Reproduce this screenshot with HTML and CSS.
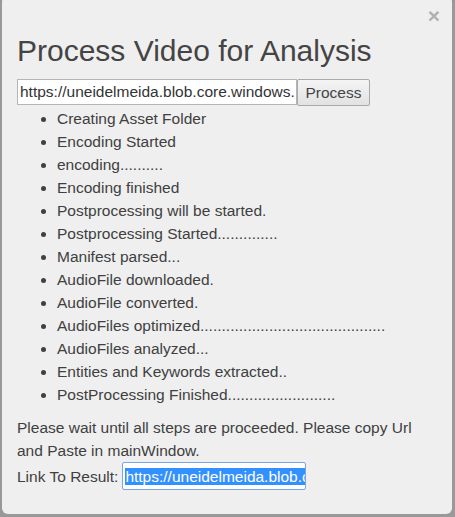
FILE: index.html
```html
<!DOCTYPE html>
<html>
<head>
<meta charset="utf-8">
<link rel="stylesheet" href="styles.css">
</head>
<body>
<div class="modal">
  <div class="close">×</div>
  <h1 class="title">Process Video for Analysis</h1>
  <div class="form-row">
    <input class="url" type="text" value="https://uneidelmeida.blob.core.windows.net/asset">
    <button class="btn">Process</button>
  </div>
  <ul class="steps">
    <li>Creating Asset Folder</li>
    <li>Encoding Started</li>
    <li>encoding..........</li>
    <li>Encoding finished</li>
    <li>Postprocessing will be started.</li>
    <li>Postprocessing Started..............</li>
    <li>Manifest parsed...</li>
    <li>AudioFile downloaded.</li>
    <li>AudioFile converted.</li>
    <li>AudioFiles optimized...........................................</li>
    <li>AudioFiles analyzed...</li>
    <li>Entities and Keywords extracted..</li>
    <li>PostProcessing Finished.........................</li>
  </ul>
  <p class="note">Please wait until all steps are proceeded. Please copy Url and Paste in mainWindow.</p>
  <div class="result">Link To Result: <span class="result-box"><span class="sel">https://uneidelmeida.blob.core.windows.net</span></span></div>
</div>
</body>
</html>
```

FILE: styles.css
```css
html, body {
  margin: 0;
  padding: 0;
  background: #999999;
  height: 100%;
  overflow: hidden;
}
.modal {
  position: relative;
  box-sizing: border-box;
  margin: -4px 0 0 2px;
  width: 450px;
  height: 518px;
  background: #efefef;
  border-radius: 6px;
  padding: 30px 16px 0 15px;
  font-family: "Liberation Sans", Arial, sans-serif;
  color: #404040;
}
.close {
  position: absolute;
  top: 8px;
  right: 12px;
  font-size: 21px;
  font-weight: bold;
  color: #b0b0b0;
  line-height: 24px;
}
.title {
  margin: 0 0 3px 0;
  font-size: 30px;
  font-weight: normal;
  line-height: 50px;
  color: #444;
}
.form-row {
  display: flex;
  margin-top: 0;
  height: 27px;
  margin-bottom: 1px;
}
.url {
  box-sizing: border-box;
  width: 280px;
  height: 26px;
  margin: 0;
  padding: 0 2px;
  border: 1px solid #b5b5b5;
  background: #fff;
  font-family: "Liberation Sans", Arial, sans-serif;
  font-size: 15.5px;
  color: #333;
  outline: none;
}
.btn {
  box-sizing: border-box;
  width: 73px;
  height: 27px;
  margin: 0;
  padding: 0;
  border: 1px solid #a9a9a9;
  border-radius: 2px;
  background: linear-gradient(#f4f4f4, #e2e2e2);
  font-family: "Liberation Sans", Arial, sans-serif;
  font-size: 15.5px;
  color: #444;
}
.steps {
  margin: 0;
  padding: 0 0 0 40px;
  font-size: 15.5px;
  line-height: 23px;
}
.note {
  margin: 10px 0 0 0;
  font-size: 15.5px;
  line-height: 23px;
  width: 410px;
}
.result {
  font-size: 15.5px;
  line-height: 23px;
  display: flex;
  align-items: center;
  white-space: nowrap;
}
.result-box {
  box-sizing: border-box;
  display: inline-block;
  width: 184px;
  height: 28px;
  margin-left: 4px;
  padding: 3px 2px 0 2px;
  border: 1px solid #7aa6e6;
  border-radius: 2px;
  background: #fff;
  overflow: hidden;
  line-height: 21px;
}
.sel {
  background: #3390ff;
  color: #fff;
  white-space: nowrap;
}
```
